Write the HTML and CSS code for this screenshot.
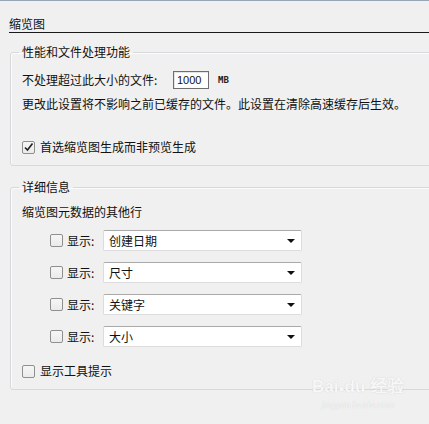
FILE: index.html
```html
<!DOCTYPE html>
<html lang="zh-CN">
<head>
<meta charset="utf-8">
<title>缩览图</title>
<link rel="stylesheet" href="styles.css">
</head>
<body>
<div class="page">
  <div class="title">缩览图</div>

  <fieldset class="group group-perf">
    <legend class="legend">性能和文件处理功能</legend>
    <div class="size-row">
      <span class="size-label">不处理超过此大小的文件:</span>
      <span class="num-input">1000</span>
      <span class="unit">MB</span>
    </div>
    <div class="note">更改此设置将不影响之前已缓存的文件。此设置在清除高速缓存后生效。</div>
    <div class="check-row check-pref">
      <span class="cb">
        <svg width="11" height="11" viewBox="0 0 11 11"><path d="M2 5.5 L4.5 8 L9.5 1.5" fill="none" stroke="#222" stroke-width="1.6"/></svg>
      </span>
      <span class="cb-text">首选缩览图生成而非预览生成</span>
    </div>
  </fieldset>

  <fieldset class="group group-detail">
    <legend class="legend">详细信息</legend>
    <div class="sub">缩览图元数据的其他行</div>
    <div class="rows">
      <div class="meta-row">
        <span class="cb"></span>
        <span class="show">显示:</span>
        <span class="select"><span class="sel-text">创建日期</span><span class="arrow"></span></span>
      </div>
      <div class="meta-row">
        <span class="cb"></span>
        <span class="show">显示:</span>
        <span class="select"><span class="sel-text">尺寸</span><span class="arrow"></span></span>
      </div>
      <div class="meta-row">
        <span class="cb"></span>
        <span class="show">显示:</span>
        <span class="select"><span class="sel-text">关键字</span><span class="arrow"></span></span>
      </div>
      <div class="meta-row">
        <span class="cb"></span>
        <span class="show">显示:</span>
        <span class="select"><span class="sel-text">大小</span><span class="arrow"></span></span>
      </div>
    </div>
    <div class="check-row check-tips">
      <span class="cb"></span>
      <span class="cb-text">显示工具提示</span>
    </div>
  </fieldset>

  <div class="watermark">
    <span class="wm-logo">Bai<span class="wm-paw">●</span>du 经验</span>
    <span class="wm-url">jingyan.baidu.com</span>
  </div>
</div>
</body>
</html>
```

FILE: styles.css
```css
html, body {
  margin: 0;
  padding: 0;
  background: #f0f0f0;
}
body {
  width: 429px;
  height: 424px;
  overflow: hidden;
  font-family: "Noto Sans CJK SC", "Noto Sans", sans-serif;
  font-size: 12px;
  line-height: 16px;
  color: #111;
}
.page {
  position: relative;
  height: 423px;
  border-top: 1px solid #98a6b8;
}
.title {
  margin: 15px -12px 0 9px;
  height: 16px;
  border-bottom: 1px solid #1a1a1a;
}
.group {
  margin: 0 0 0 10px;
  width: 440px;
  box-sizing: border-box;
  border: 1px solid #d6d9dc;
  border-radius: 3px;
  box-shadow: inset 1px 1px 0 #fbfbfb;
  padding: 0 0 0 11px;
  min-width: 0;
}
.group-perf {
  margin-top: 11px;
  padding-bottom: 10px;
}
.group-detail {
  margin-top: 13px;
  padding-bottom: 10px;
}
.legend {
  padding: 0 3px;
  margin-left: -3px;
  line-height: 16px;
  height: 16px;
}
.size-row {
  display: flex;
  align-items: center;
  height: 20px;
  margin-top: 10px;
}
.size-label {
  width: 151px;
}
.num-input {
  box-sizing: border-box;
  width: 36px;
  height: 18px;
  border: 1px solid #6e6e6e;
  box-shadow: inset 1px 1px 0 #e4e4e4;
  background: #fff;
  font-family: "Liberation Sans", Arial, sans-serif;
  font-size: 11px;
  line-height: 16px;
  padding-left: 3px;
}
.unit {
  margin-left: 9px;
  font-family: "DejaVu Sans Mono", monospace;
  font-size: 9px;
  font-weight: bold;
  color: #222;
}
.note {
  margin-top: 6px;
  white-space: nowrap;
}
.check-row {
  display: flex;
  align-items: center;
  height: 16px;
}
.check-pref {
  margin-top: 27px;
}
.check-tips {
  margin-top: 16px;
}
.cb {
  box-sizing: border-box;
  width: 13px;
  height: 13px;
  border: 1px solid #8e8f8f;
  border-radius: 2px;
  background: linear-gradient(#f6f6f6, #ebebeb);
  display: flex;
  align-items: center;
  justify-content: center;
  flex: none;
}
.cb-text {
  margin-left: 5px;
}
.sub {
  margin-top: 9px;
}
.rows {
  display: flex;
  flex-direction: column;
  gap: 11px;
  margin-top: 10px;
  padding-left: 28px;
}
.meta-row {
  display: flex;
  align-items: center;
  height: 21px;
}
.show {
  margin-left: 4px;
  width: 36px;
}
.select {
  box-sizing: border-box;
  width: 199px;
  height: 21px;
  display: flex;
  align-items: center;
  justify-content: space-between;
  background: #fff;
  border: 1px solid #dcdcdc;
  border-top-color: #aaaaaa;
  border-radius: 2px;
  padding: 0 5px 0 5px;
}
.arrow {
  width: 0;
  height: 0;
  border-left: 4px solid transparent;
  border-right: 4px solid transparent;
  border-top: 4px solid #111;
  margin-right: 1px;
}
.watermark {
  position: absolute;
  left: 312px;
  top: 376px;
  display: flex;
  flex-direction: column;
  align-items: center;
  color: #f7f7f7;
  text-shadow: 0 0 1px #c9c9c9;
  pointer-events: none;
}
.wm-logo {
  font-family: "Liberation Sans", Arial, sans-serif;
  font-size: 17px;
  font-weight: bold;
  line-height: 20px;
}
.wm-paw {
  font-size: 10px;
}
.wm-url {
  font-family: "Liberation Sans", Arial, sans-serif;
  font-size: 9px;
  line-height: 12px;
}
```
